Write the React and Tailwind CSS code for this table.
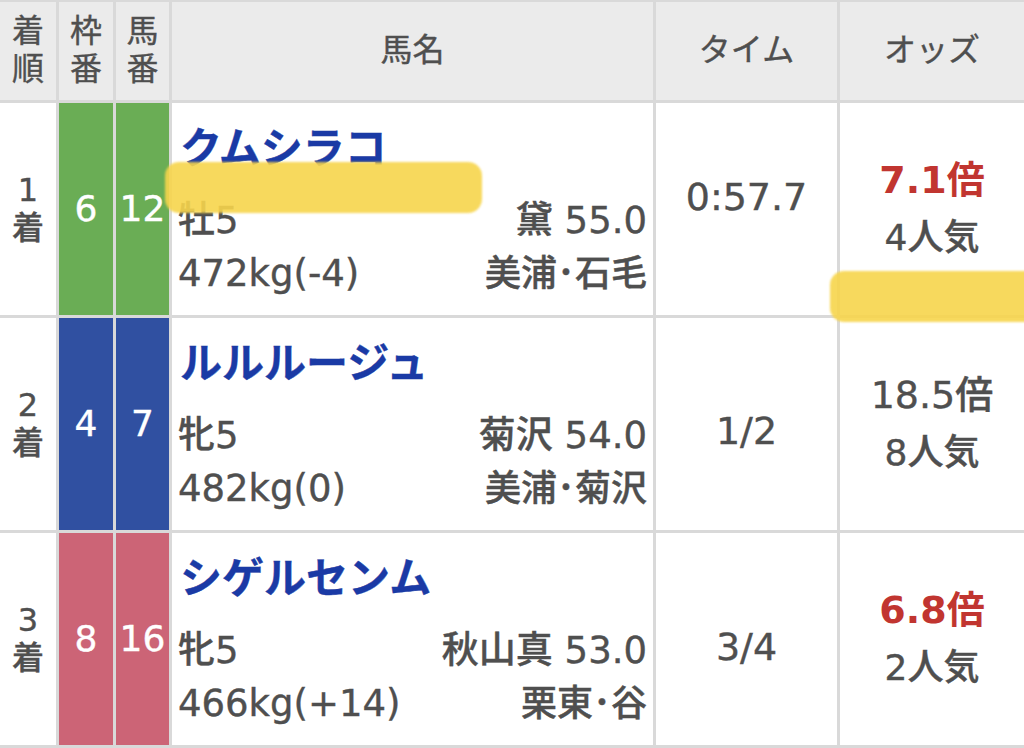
import React from "react";

const results = [
  {
    rank: "1",
    waku: "6",
    umaban: "12",
    color: "bg-[#6aad55]",
    name: "クムシラコ",
    sex: "牡5",
    weight: "472kg(-4)",
    jockey: "黛 55.0",
    stable: "美浦･石毛",
    time: "0:57.7",
    timeClass: "mb-[24px]",
    odds: "7.1倍",
    hot: true,
    pop: "4人気",
  },
  {
    rank: "2",
    waku: "4",
    umaban: "7",
    color: "bg-[#3050a1]",
    name: "ルルルージュ",
    sex: "牝5",
    weight: "482kg(0)",
    jockey: "菊沢 54.0",
    stable: "美浦･菊沢",
    time: "1/2",
    timeClass: "mt-[14px]",
    odds: "18.5倍",
    hot: false,
    pop: "8人気",
  },
  {
    rank: "3",
    waku: "8",
    umaban: "16",
    color: "bg-[#cc6476]",
    name: "シゲルセンム",
    sex: "牝5",
    weight: "466kg(+14)",
    jockey: "秋山真 53.0",
    stable: "栗東･谷",
    time: "3/4",
    timeClass: "mt-[16px]",
    odds: "6.8倍",
    hot: true,
    pop: "2人気",
  },
];

export default function App() {
  return (
    <div className="relative w-[1024px] h-[748px] overflow-hidden bg-[#d9d9d9] pt-[2px] font-['DejaVu_Sans','Noto_Sans_CJK_JP',sans-serif] font-medium text-[#4f4f4f] [-webkit-text-stroke:0.4px]">
      <div className="grid grid-cols-[56px_54px_53px_481px_181px_184px] grid-rows-[98px_212px_212px_212px] gap-[3px]">
        {/* header */}
        <div className="bg-[#ebebeb] flex flex-col items-center justify-center text-[32px] leading-[38px] pb-[2px] font-normal">
          <span>着</span>
          <span>順</span>
        </div>
        <div className="bg-[#ebebeb] flex flex-col items-center justify-center text-[32px] leading-[38px] pb-[2px] font-normal">
          <span>枠</span>
          <span>番</span>
        </div>
        <div className="bg-[#ebebeb] flex flex-col items-center justify-center text-[32px] leading-[38px] pb-[2px] font-normal">
          <span>馬</span>
          <span>番</span>
        </div>
        <div className="bg-[#ebebeb] flex items-center justify-center text-[32px] pb-[2px] font-normal">馬名</div>
        <div className="bg-[#ebebeb] flex items-center justify-center text-[32px] pb-[2px] font-normal">タイム</div>
        <div className="bg-[#ebebeb] flex items-center justify-center text-[32px] pb-[2px] font-normal">オッズ</div>

        {results.map((r) => (
          <React.Fragment key={r.rank}>
            <div className="bg-white flex flex-col items-center justify-center text-[32px] leading-[38px]">
              <span>{r.rank}</span>
              <span>着</span>
            </div>
            <div className={`${r.color} flex items-center justify-center text-white text-[36px]`}>{r.waku}</div>
            <div className={`${r.color} flex items-center justify-center text-white text-[36px]`}>{r.umaban}</div>
            <div className="bg-white flex flex-col pl-[6px] pr-[6px] pt-[17px]">
              <div className="ml-[2px] h-[50px] leading-[50px] text-[42px] font-bold text-[#1a3aa5] font-['Noto_Sans_CJK_JP',sans-serif]">
                {r.name}
              </div>
              <div className="mt-[24px] h-[53px] flex items-center justify-between text-[37px]">
                <span>{r.sex}</span>
                <span>{r.jockey}</span>
              </div>
              <div className="h-[53px] flex items-center justify-between text-[37px]">
                <span>{r.weight}</span>
                <span className="text-[36px]">{r.stable}</span>
              </div>
            </div>
            <div className="bg-white flex items-center justify-center text-[38px]">
              <span className={r.timeClass}>{r.time}</span>
            </div>
            <div className="bg-white flex flex-col items-center justify-center">
              <span className={`text-[38px] leading-[58px] ${r.hot ? "text-[#c13530] font-bold [-webkit-text-stroke:0px]" : ""}`}>{r.odds}</span>
              <span className="text-[36px] leading-[58px]">{r.pop}</span>
            </div>
          </React.Fragment>
        ))}
      </div>

      {/* marker highlights drawn over the table */}
      <div className="absolute left-[165px] top-[162px] w-[317px] h-[51px] rounded-[14px] bg-[#f7d54c] opacity-90 blur-[1px]" />
      <div className="absolute left-[830px] top-[271px] w-[210px] h-[51px] rounded-[14px] bg-[#f7d54c] opacity-90 blur-[1px]" />
    </div>
  );
}
